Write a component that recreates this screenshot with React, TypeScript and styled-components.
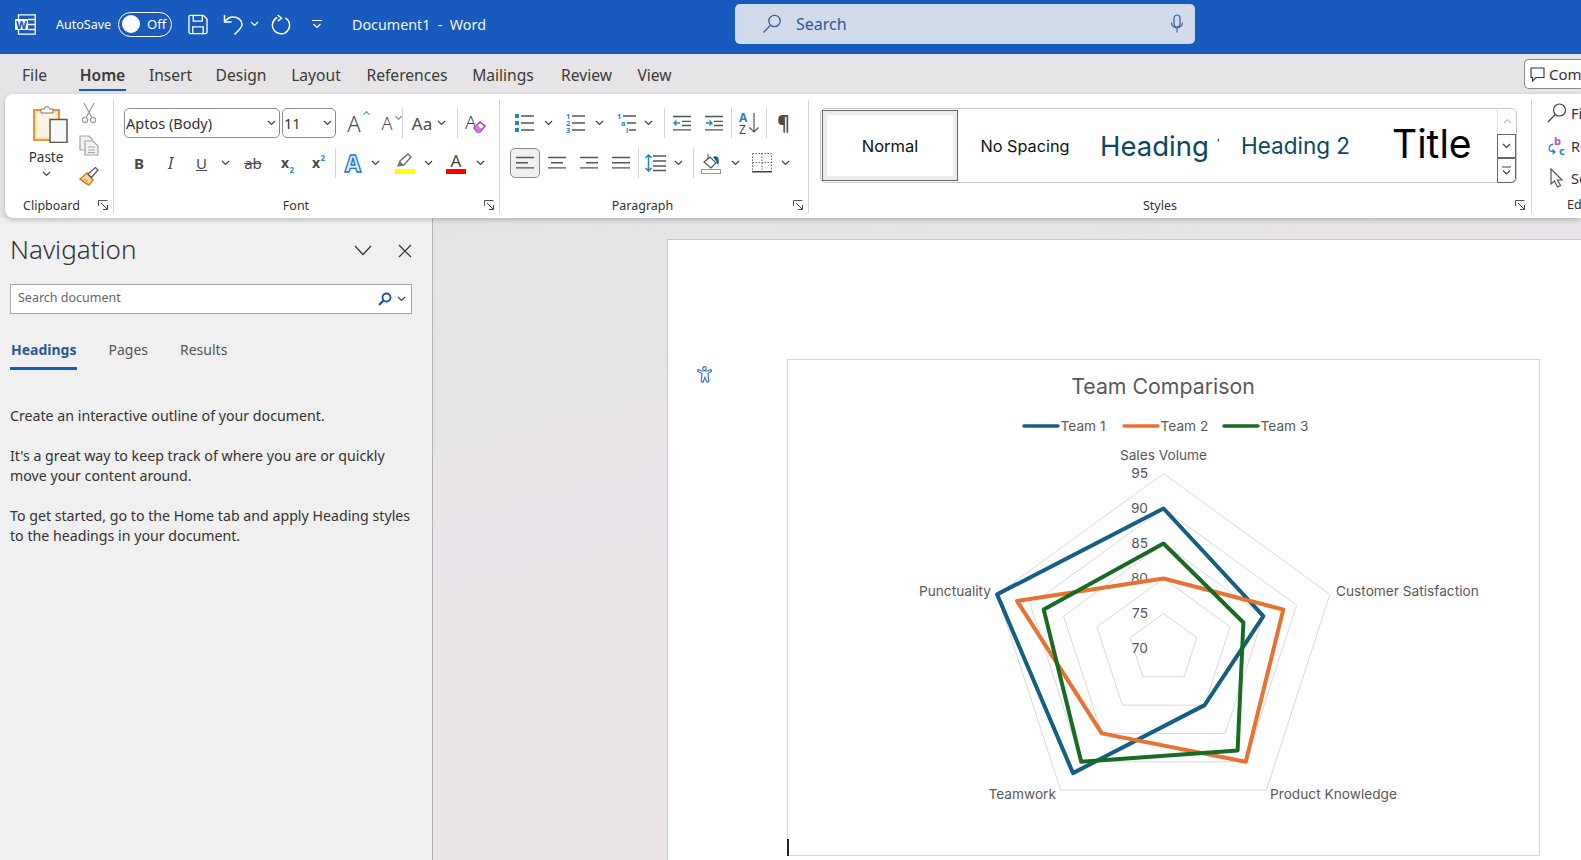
import React from "react";
import styled, { createGlobalStyle } from "styled-components";

const UI_FONT = `"Noto Sans", "Open Sans", "Liberation Sans", sans-serif`;
const DOC_FONT = `Inter, Lato, "Liberation Sans", sans-serif`;

const TEAMS = [
  { name: "Team 1", color: "#156082", values: [90, 85, 80, 92, 95] },
  { name: "Team 2", color: "#e97132", values: [80, 88, 90, 85, 92] },
  { name: "Team 3", color: "#196b24", values: [85, 82, 88, 90, 88] },
];
const LEVELS = [75, 80, 85, 90, 95];
const TICKS = [70, 75, 80, 85, 90, 95];
const CENTER_X = 375.5;
const CENTER_Y = 288.5;

function radarPoint(value: number, index: number) {
  const r = (value - 70) * 7;
  const a = (index * 72 * Math.PI) / 180;
  return `${(CENTER_X + r * Math.sin(a)).toFixed(1)},${(CENTER_Y - r * Math.cos(a)).toFixed(1)}`;
}

function Chev({ color = "#444" }: { color?: string }) {
  return (
    <svg width="9" height="6" viewBox="0 0 9 6">
      <path d="M1 1l3.5 3.5L8 1" stroke={color} fill="none" strokeWidth="1.2" />
    </svg>
  );
}

function Launcher() {
  return (
    <svg width="10" height="10" viewBox="0 0 10 10">
      <path d="M.5 6V.5H9.5" stroke="#555" fill="none" />
      <path d="M3 3l6 6M9.5 5v4.5H5" stroke="#444" fill="none" />
    </svg>
  );
}

function Lines({ rows }: { rows: [number, number][] }) {
  return (
    <svg width="18" height="16" viewBox="0 0 18 16">
      {rows.map(([x1, x2], i) => (
        <path key={i} d={`M${x1} ${2.5 + i * 5.2}H${x2}`} stroke="#555" strokeWidth="1.4" />
      ))}
    </svg>
  );
}

function ListIcon({ marks }: { marks: string[] }) {
  return (
    <svg width="19" height="20" viewBox="0 0 19 20">
      {marks.map((m, i) =>
        m === "" ? (
          <rect key={i} x="0" y={1 + i * 7} width="4" height="4" fill="#1f83d0" />
        ) : (
          <text key={i} x="0" y={6 + i * 7} fontSize="7.5" fontWeight="700" fill="#1f83d0" fontFamily={UI_FONT}>
            {m}
          </text>
        )
      )}
      {marks.map((_, i) => (
        <path key={i} d={`M6 ${3 + i * 7}H19`} stroke="#555" strokeWidth="1.3" />
      ))}
    </svg>
  );
}

function App() {
  return (
    <>
      <GlobalStyle />
      <StyledApp>
        <StyledTitleBar>
          <StyledWordLogo>
            <svg width="21" height="21" viewBox="0 0 21 21">
              <path d="M3.5.8h16.7v19.4H3.5z" fill="none" stroke="#fff" strokeWidth="1.3" />
              <path d="M13 5.5h7M13 10.5h7M13 15.5h7" stroke="#fff" strokeWidth="1.3" />
              <rect x="0" y="5" width="13" height="11" rx="1" fill="#fff" />
              <text x="6.5" y="14.5" textAnchor="middle" fontSize="11" fontWeight="800" fill="#185abd" fontFamily={UI_FONT}>
                W
              </text>
            </svg>
          </StyledWordLogo>
          <StyledAutoSave>AutoSave</StyledAutoSave>
          <StyledToggle>
            <StyledKnob />
            Off
          </StyledToggle>
          <StyledTitleIcon $ml={16} $w={20}>
            <svg width="21" height="21" viewBox="0 0 21 21" fill="none" stroke="#fff" strokeWidth="1.4">
              <path d="M1 2.5A1.5 1.5 0 0 1 2.5 1h13.7L20 4.800V18.500A1.500 1.500 0 0 1 18.500 20H2.500A1.500 1.500 0 0 1 1 18.500z" />
              <path d="M5.500 1v6h9.500V1M5 20v-7h11v7" />
            </svg>
          </StyledTitleIcon>
          <StyledTitleIcon $ml={15} $w={21}>
            <svg width="21" height="22" viewBox="0 0 21 22" fill="none" stroke="#fff" strokeWidth="1.5">
              <path d="M1.500 2v7h7" />
              <path d="M1.500 9C4 5.500 7 4 10 4c5 0 9 3 9 7.500 0 2.500-1.500 4-3 5.500l-4.500 4.500" />
            </svg>
          </StyledTitleIcon>
          <StyledTitleIcon $ml={6} $w={9}>
            <Chev color="#fff" />
          </StyledTitleIcon>
          <StyledTitleIcon $ml={12} $w={21}>
            <svg width="22" height="22" viewBox="0 0 22 22" fill="none" stroke="#fff" strokeWidth="1.500">
              <path d="M7 1.500l4 3.500-4 3" />
              <path d="M6.500 4.200A9 9 0 1 0 15 4.500" />
            </svg>
          </StyledTitleIcon>
          <StyledTitleIcon $ml={20} $w={10}>
            <svg width="10" height="10" viewBox="0 0 10 10" fill="none" stroke="#fff" strokeWidth="1.200">
              <path d="M0 1.500h10M1.500 5l3.500 3.500L8.500 5" />
            </svg>
          </StyledTitleIcon>
          <StyledDocName>Document1&nbsp; -&nbsp; Word</StyledDocName>
          <StyledSearch>
            <svg width="20" height="20" viewBox="0 0 20 20" fill="none" stroke="#3a5f9f" strokeWidth="1.300">
              <circle cx="12.500" cy="7" r="5.700" />
              <path d="M8.500 11.200L1.500 18.500" />
            </svg>
            <StyledSearchText>Search</StyledSearchText>
            <svg width="14" height="20" viewBox="0 0 14 20" fill="none" stroke="#3a5f9f" strokeWidth="1.200">
              <rect x="4" y="1" width="6" height="12" rx="3" />
              <path d="M1.500 8.500a5.500 5.500 0 0 0 11 0M7 14v4.500" />
            </svg>
          </StyledSearch>
        </StyledTitleBar>

        <StyledTabStrip>
          <StyledTabs>
            <StyledTab $w={25} $mr={9}>File</StyledTab>
            <StyledTab $w={47} $active>Home</StyledTab>
            <StyledTab $w={43}>Insert</StyledTab>
            <StyledTab $w={52}>Design</StyledTab>
            <StyledTab $w={52}>Layout</StyledTab>
            <StyledTab $w={84}>References</StyledTab>
            <StyledTab $w={62} $mr={3}>Mailings</StyledTab>
            <StyledTab $w={53}>Review</StyledTab>
            <StyledTab $w={37}>View</StyledTab>
          </StyledTabs>
          <StyledComments>
            <svg width="15" height="15" viewBox="0 0 15 15" fill="none" stroke="#333" strokeWidth="1.100">
              <path d="M1 1h13v9.500H6L2.500 14v-3.500H1z" />
            </svg>
            Comments
          </StyledComments>
        </StyledTabStrip>

        <StyledRibbonBand>
          <StyledRibbon>
            <StyledGroup $w={109}>
              <StyledClipboardBody>
                <StyledPasteColumn>
                  <svg width="35" height="39" viewBox="0 0 35 39">
                    <rect x="1" y="6" width="25" height="30" fill="#fbe3b8" stroke="#e8923c" strokeWidth="2" />
                    <rect x="4" y="9" width="19" height="24" fill="#fdf3e0" />
                    <path d="M8 9V5h3.500a2.500 2.500 0 0 1 5 0H20v4z" fill="#fff" stroke="#777" />
                    <rect x="17" y="15.500" width="17" height="23" fill="#f8f8f8" stroke="#5a5a5a" strokeWidth="1.500" />
                  </svg>
                  <StyledPasteLabel>Paste</StyledPasteLabel>
                  <Chev />
                </StyledPasteColumn>
                <StyledClipTools>
                  <svg width="14" height="22" viewBox="0 0 14 22" fill="none" stroke="#9a9a9a" strokeWidth="1.200">
                    <path d="M2 1l7.500 14M12 1L4.500 15" />
                    <circle cx="3" cy="18" r="2.700" />
                    <circle cx="11" cy="18" r="2.700" />
                  </svg>
                  <svg width="20" height="21" viewBox="0 0 20 21" fill="#f2f2f2" stroke="#a5a5a5" strokeWidth="1.200">
                    <path d="M1 1h9l3 3v11H1z" />
                    <path d="M6 6h8l5 5v9H6z" />
                    <path d="M9 12h7M9 15h7M9 17.500h7" />
                  </svg>
                  <svg width="20" height="19" viewBox="0 0 20 19">
                    <path d="M1 12l7-6 6 7-4 5c-2-1-6-3-9-6z" fill="#f6d6a8" stroke="#e07c12" strokeWidth="1.500" />
                    <path d="M3 14l4-2M6 16l3-3" stroke="#e07c12" />
                    <path d="M9 7l3.500 3.500L19 3l-2.500-2.500z" fill="#fff" stroke="#555" strokeWidth="1.200" />
                  </svg>
                </StyledClipTools>
              </StyledClipboardBody>
              <StyledFooter $mr={5}>
                <StyledGroupLabel>Clipboard</StyledGroupLabel>
                <Launcher />
              </StyledFooter>
            </StyledGroup>

            <StyledGroup $w={386}>
              <StyledRow>
                <StyledSelect $w={156} $ml={10}>
                  Aptos (Body)
                  <Chev />
                </StyledSelect>
                <StyledSelect $w={54} $ml={2}>
                  11
                  <Chev />
                </StyledSelect>
                <StyledCell $w={20} $ml={8}>
                  <StyledGlyph $size={22} $weight={300}>A</StyledGlyph>
                  <StyledCaret $up />
                </StyledCell>
                <StyledCell $w={18} $ml={14}>
                  <StyledGlyph $size={18} $weight={300}>A</StyledGlyph>
                  <StyledCaret />
                </StyledCell>
                <StyledSep $ml={6} />
                <StyledCell $w={24} $ml={7}>
                  <StyledGlyph $size={17}>Aa</StyledGlyph>
                </StyledCell>
                <StyledCell $w={9} $ml={3}><Chev /></StyledCell>
                <StyledSep $ml={11} />
                <StyledCell $w={21} $ml={7}>
                  <svg width="21" height="20" viewBox="0 0 21 20">
                    <text x="0" y="16" fontSize="19" fontWeight="300" fill="#444" fontFamily={UI_FONT}>A</text>
                    <path d="M9 15l6-6 5 4-5 6h-3z" fill="#fff" stroke="#9b3fae" strokeWidth="1.500" />
                    <path d="M12 12l5 4-2 3h-3l-3-4z" fill="#c77fd6" />
                  </svg>
                </StyledCell>
              </StyledRow>
              <StyledRow $mt={10}>
                <StyledCell $w={10} $ml={20}>
                  <StyledGlyph $size={15} $weight={700}>B</StyledGlyph>
                </StyledCell>
                <StyledCell $w={9} $ml={22}>
                  <StyledGlyph $size={16} $italic>I</StyledGlyph>
                </StyledCell>
                <StyledCell $w={11} $ml={21}>
                  <StyledGlyph $size={15} $underline>U</StyledGlyph>
                </StyledCell>
                <StyledCell $w={9} $ml={14}><Chev /></StyledCell>
                <StyledCell $w={20} $ml={13}>
                  <StyledGlyph $size={15} $strike>ab</StyledGlyph>
                </StyledCell>
                <StyledCell $w={14} $ml={15}>
                  <StyledGlyph $size={14} $weight={700}>x</StyledGlyph>
                  <StyledSub>2</StyledSub>
                </StyledCell>
                <StyledCell $w={14} $ml={17}>
                  <StyledGlyph $size={14} $weight={700}>x</StyledGlyph>
                  <StyledSup>2</StyledSup>
                </StyledCell>
                <StyledSep $ml={12} />
                <StyledCell $w={20} $ml={7}>
                  <StyledEffectA>A</StyledEffectA>
                </StyledCell>
                <StyledCell $w={9} $ml={8}><Chev /></StyledCell>
                <StyledCell $w={20} $ml={15}>
                  <StyledColorTool>
                    <svg width="20" height="15" viewBox="0 0 20 15">
                      <path d="M3 13l2-5 8-7 3 3-7 8z" fill="#fff" stroke="#666" strokeWidth="1.300" />
                      <path d="M3 13l2-5 4 4z" fill="#777" />
                    </svg>
                    <StyledColorBar $color="#ffff00" />
                  </StyledColorTool>
                </StyledCell>
                <StyledCell $w={9} $ml={9}><Chev /></StyledCell>
                <StyledCell $w={20} $ml={13}>
                  <StyledColorTool>
                    <StyledColorLetter>A</StyledColorLetter>
                    <StyledColorBar $color="#ff0000" />
                  </StyledColorTool>
                </StyledCell>
                <StyledCell $w={9} $ml={10}><Chev /></StyledCell>
              </StyledRow>
              <StyledFooter $mr={5}>
                <StyledGroupLabel $pr={6}>Font</StyledGroupLabel>
                <Launcher />
              </StyledFooter>
            </StyledGroup>

            <StyledGroup $w={309}>
              <StyledRow>
                <StyledCell $w={19} $ml={15}><ListIcon marks={["", "", ""]} /></StyledCell>
                <StyledCell $w={9} $ml={10}><Chev /></StyledCell>
                <StyledCell $w={19} $ml={13}><ListIcon marks={["1", "2", "3"]} /></StyledCell>
                <StyledCell $w={9} $ml={10}><Chev /></StyledCell>
                <StyledCell $w={19} $ml={13}>
                  <svg width="19" height="20" viewBox="0 0 19 20">
                    <text x="0" y="6" fontSize="7.500" fontWeight="700" fill="#1f83d0" fontFamily={UI_FONT}>1</text>
                    <text x="4" y="13" fontSize="7.500" fontWeight="700" fill="#1f83d0" fontFamily={UI_FONT}>a</text>
                    <text x="9" y="20" fontSize="7.500" fontWeight="700" fill="#1f83d0" fontFamily={UI_FONT}>i</text>
                    <path d="M6 3h13M10 10h9M12 17h7" stroke="#555" strokeWidth="1.300" />
                  </svg>
                </StyledCell>
                <StyledCell $w={9} $ml={8}><Chev /></StyledCell>
                <StyledSep $ml={11} />
                <StyledCell $w={18} $ml={8}>
                  <svg width="18" height="16" viewBox="0 0 18 16" fill="none">
                    <path d="M0 1.500h18M9 6.300h9M9 10.500h9M0 14.800h18" stroke="#555" strokeWidth="1.300" />
                    <path d="M7 8H1M3.500 5.500L1 8l2.500 2.500" stroke="#1f83d0" strokeWidth="1.300" />
                  </svg>
                </StyledCell>
                <StyledCell $w={18} $ml={14}>
                  <svg width="18" height="16" viewBox="0 0 18 16" fill="none">
                    <path d="M0 1.500h18M9 6.300h9M9 10.500h9M0 14.800h18" stroke="#555" strokeWidth="1.300" />
                    <path d="M1 8h6M4.500 5.500L7 8l-2.500 2.500" stroke="#1f83d0" strokeWidth="1.300" />
                  </svg>
                </StyledCell>
                <StyledSep $ml={8} />
                <StyledCell $w={20} $ml={7}>
                  <svg width="20" height="22" viewBox="0 0 20 22">
                    <text x="0" y="10" fontSize="12" fontWeight="700" fill="#1f83d0" fontFamily={UI_FONT}>A</text>
                    <text x="0" y="21.500" fontSize="12" fontWeight="400" fill="#444" fontFamily={UI_FONT}>Z</text>
                    <path d="M15 1v19M10.500 15.500l4.500 4.500 4.500-4.500" stroke="#555" strokeWidth="1.200" fill="none" />
                  </svg>
                </StyledCell>
                <StyledSep $ml={7} />
                <StyledCell $w={13} $ml={10}>
                  <StyledGlyph $size={19} $weight={700}>¶</StyledGlyph>
                </StyledCell>
              </StyledRow>
              <StyledRow $mt={10}>
                <StyledAlignActive>
                  <Lines rows={[[0, 18], [0, 12], [0, 18], [0, 12]]} />
                </StyledAlignActive>
                <StyledCell $w={18} $ml={8}><Lines rows={[[0, 18], [3, 15], [0, 18], [3, 15]]} /></StyledCell>
                <StyledCell $w={18} $ml={14}><Lines rows={[[0, 18], [6, 18], [0, 18], [6, 18]]} /></StyledCell>
                <StyledCell $w={18} $ml={14}><Lines rows={[[0, 18], [0, 18], [0, 18], [0, 18]]} /></StyledCell>
                <StyledSep $ml={8} />
                <StyledCell $w={21} $ml={6}>
                  <svg width="21" height="18" viewBox="0 0 21 18" fill="none">
                    <path d="M8 2h13M8 7h13M8 12h13M8 16.500h13" stroke="#555" strokeWidth="1.400" />
                    <path d="M3.500 1v16M.5 4l3-3 3 3M.5 14l3 3 3-3" stroke="#1f83d0" strokeWidth="1.500" />
                  </svg>
                </StyledCell>
                <StyledCell $w={9} $ml={8}><Chev /></StyledCell>
                <StyledSep $ml={10} />
                <StyledCell $w={20} $ml={7}>
                  <svg width="20" height="21" viewBox="0 0 20 21">
                    <path d="M3 9l6-5 6 6-5 5z" fill="#fff" stroke="#555" strokeWidth="1.200" />
                    <path d="M7 .5v6" stroke="#555" />
                    <path d="M12 4c2-1.500 5-1 5.500 1.500l.5 5-2 .5-1-3z" fill="#156082" />
                    <rect x=".5" y="16.500" width="19" height="4" fill="#fff" stroke="#999" />
                  </svg>
                </StyledCell>
                <StyledCell $w={9} $ml={10}><Chev /></StyledCell>
                <StyledCell $w={20} $ml={12}>
                  <svg width="20" height="20" viewBox="0 0 20 20" fill="none" stroke="#666">
                    <path d="M.5.500h19v18M.5.500v18M10 .500v18M.5 9.500h19" strokeDasharray="1.500 1.500" />
                    <path d="M0 18.800h20" stroke="#444" strokeWidth="1.500" strokeDasharray="none" />
                  </svg>
                </StyledCell>
                <StyledCell $w={9} $ml={9}><Chev /></StyledCell>
              </StyledRow>
              <StyledFooter $mr={5}>
                <StyledGroupLabel $pr={8}>Paragraph</StyledGroupLabel>
                <Launcher />
              </StyledFooter>
            </StyledGroup>

            <StyledGroup $w={723}>
              <StyledGallery>
                <StyledNormalStyle>Normal</StyledNormalStyle>
                <StyledNoSpacing>No Spacing</StyledNoSpacing>
                <StyledHeadingOne>Heading 1</StyledHeadingOne>
                <StyledHeadingTwo>Heading 2</StyledHeadingTwo>
                <StyledTitleStyle>Title</StyledTitleStyle>
                <StyledScrollColumn>
                  <StyledScrollUp>
                    <svg width="9" height="6" viewBox="0 0 9 6">
                      <path d="M1 5l3.500-3.500L8 5" stroke="#c4c4c4" fill="none" strokeWidth="1.200" />
                    </svg>
                  </StyledScrollUp>
                  <StyledScrollBtn $h={24}><Chev /></StyledScrollBtn>
                  <StyledScrollBtn $h={25}>
                    <svg width="9" height="10" viewBox="0 0 9 10" fill="none" stroke="#444" strokeWidth="1.200">
                      <path d="M0 1h9M1 4.500L4.500 8 8 4.500" />
                    </svg>
                  </StyledScrollBtn>
                </StyledScrollColumn>
              </StyledGallery>
              <StyledFooter $mr={6}>
                <StyledGroupLabel $pr={4}>Styles</StyledGroupLabel>
                <Launcher />
              </StyledFooter>
            </StyledGroup>

            <StyledEditing>
              <StyledEditRow>
                <svg width="20" height="20" viewBox="0 0 20 20" fill="none" stroke="#444" strokeWidth="1.200">
                  <circle cx="12.500" cy="7" r="6" />
                  <path d="M8.200 11.500L1 19" />
                </svg>
                Find
              </StyledEditRow>
              <StyledEditRow>
                <svg width="20" height="20" viewBox="0 0 20 20" fill="none">
                  <text x="7" y="9" fontSize="11" fontWeight="700" fill="#b653c6" fontFamily={UI_FONT}>b</text>
                  <text x="12" y="19" fontSize="11" fontWeight="700" fill="#1f83d0" fontFamily={UI_FONT}>c</text>
                  <path d="M6 8C2 9 1 13 3 15l5 1M5.500 13.500L8 16l-2.500 2" stroke="#1f83d0" strokeWidth="1.300" />
                </svg>
                Replace
              </StyledEditRow>
              <StyledEditRow>
                <svg width="20" height="21" viewBox="0 0 20 21" fill="#fff" stroke="#555" strokeWidth="1.200">
                  <path d="M4 1v15l3.500-3 3 6 3-1.500-3-5.500h4.500z" />
                </svg>
                Select
              </StyledEditRow>
              <StyledEditLabel>Editing</StyledEditLabel>
            </StyledEditing>
          </StyledRibbon>
        </StyledRibbonBand>

        <StyledMain>
          <StyledNavPane>
            <StyledNavHeader>
              <StyledNavTitle>Navigation</StyledNavTitle>
              <svg width="18" height="11" viewBox="0 0 18 11" fill="none" stroke="#333" strokeWidth="1.200">
                <path d="M1 1l8 8.500L17 1" />
              </svg>
              <StyledNavClose>
                <svg width="14" height="14" viewBox="0 0 14 14" fill="none" stroke="#333" strokeWidth="1.200">
                  <path d="M1 1l12 12M13 1L1 13" />
                </svg>
              </StyledNavClose>
            </StyledNavHeader>
            <StyledNavSearch>
              <StyledNavSearchText>Search document</StyledNavSearchText>
              <svg width="14" height="14" viewBox="0 0 14 14" fill="none" stroke="#1f4e9c" strokeWidth="1.800">
                <circle cx="8.500" cy="5.500" r="4" />
                <path d="M5.500 8.500L1 13" strokeWidth="2.200" />
              </svg>
              <Chev />
            </StyledNavSearch>
            <StyledNavTabs>
              <StyledNavTab $active>Headings</StyledNavTab>
              <StyledNavTab>Pages</StyledNavTab>
              <StyledNavTab>Results</StyledNavTab>
            </StyledNavTabs>
            <StyledNavText>Create an interactive outline of your document.</StyledNavText>
            <StyledNavText>
              It's a great way to keep track of where you are or quickly move your content around.
            </StyledNavText>
            <StyledNavText>
              To get started, go to the Home tab and apply Heading styles to the headings in your document.
            </StyledNavText>
          </StyledNavPane>

          <StyledDocArea>
            <StyledPage>
              <StyledAnchor>
                <svg width="15" height="17" viewBox="0 0 15 17" fill="none" stroke="#3b73d6" strokeWidth="1.200">
                  <circle cx="7.500" cy="2.500" r="1.800" />
                  <path d="M1 3.500l4 1.500h5l4-1.500.5 1.500-3.500 2.500.8 8-1.800.8-2-5-2 5-1.800-.8.8-8L.5 5z" />
                </svg>
              </StyledAnchor>
              <StyledChartFrame>
                <StyledCaretLine />
                <svg width="751" height="495" viewBox="0 0 751 495">
                  <StyledChartTitle x={375} y={34} textAnchor="middle">Team Comparison</StyledChartTitle>
                  {TEAMS.map((team, i) => (
                    <g key={team.name}>
                      <path
                        d={`M${236 + i * 100} 66h34`}
                        stroke={team.color}
                        strokeWidth="3.500"
                        strokeLinecap="round"
                      />
                      <StyledChartLabel x={272.5 + i * 100} y={71}>{team.name}</StyledChartLabel>
                    </g>
                  ))}
                  {LEVELS.map((level) => (
                    <polygon
                      key={level}
                      points={[0, 1, 2, 3, 4].map((i) => radarPoint(level, i)).join(" ")}
                      fill="none"
                      stroke="#d9d9d9"
                    />
                  ))}
                  {TICKS.map((tick) => (
                    <StyledChartLabel key={tick} x={360} y={CENTER_Y + 4.5 - (tick - 70) * 7} textAnchor="end">
                      {tick}
                    </StyledChartLabel>
                  ))}
                  {TEAMS.map((team) => (
                    <polygon
                      key={team.name}
                      points={team.values.map((v, i) => radarPoint(v, i)).join(" ")}
                      fill="none"
                      stroke={team.color}
                      strokeWidth="4"
                      strokeLinejoin="round"
                    />
                  ))}
                  <StyledChartLabel x={375.5} y={100} textAnchor="middle">Sales Volume</StyledChartLabel>
                  <StyledChartLabel x={548} y={236}>Customer Satisfaction</StyledChartLabel>
                  <StyledChartLabel x={482} y={439}>Product Knowledge</StyledChartLabel>
                  <StyledChartLabel x={268} y={439} textAnchor="end">Teamwork</StyledChartLabel>
                  <StyledChartLabel x={203} y={236} textAnchor="end">Punctuality</StyledChartLabel>
                </svg>
              </StyledChartFrame>
            </StyledPage>
          </StyledDocArea>
        </StyledMain>
      </StyledApp>
    </>
  );
}

export default App;

const GlobalStyle = createGlobalStyle`
  html, body {
    margin: 0;
    height: 100%;
    overflow: hidden;
    font-family: ${UI_FONT};
  }
  * {
    box-sizing: border-box;
  }
`;

const StyledApp = styled.div`
  height: 100vh;
  display: flex;
  flex-direction: column;
  overflow: hidden;
  background: #e6e4e6;
`;

const StyledTitleBar = styled.div`
  height: 54px;
  flex-shrink: 0;
  display: flex;
  align-items: center;
  padding: 0 0 6px 15px;
  background: #185abd;
  color: #fff;
`;

const StyledWordLogo = styled.div`
  width: 21px;
  height: 21px;
  display: flex;
`;

const StyledAutoSave = styled.div`
  margin-left: 20px;
  width: 56px;
  font-size: 12.5px;
  white-space: nowrap;
`;

const StyledToggle = styled.div`
  margin-left: 6px;
  width: 54px;
  height: 25px;
  display: flex;
  align-items: center;
  gap: 7px;
  padding-left: 3px;
  border: 1.5px solid #fff;
  border-radius: 13px;
  font-size: 13px;
`;

const StyledKnob = styled.div`
  width: 18px;
  height: 18px;
  border-radius: 50%;
  background: #fff;
`;

const StyledTitleIcon = styled.div<{ $ml: number; $w: number }>`
  margin-left: ${(p) => p.$ml}px;
  width: ${(p) => p.$w}px;
  display: flex;
  justify-content: center;
`;

const StyledDocName = styled.div`
  margin-left: 30px;
  width: 135px;
  font-size: 14.3px;
  white-space: nowrap;
  color: #f2f5fb;
`;

const StyledSearch = styled.div`
  margin-left: 248px;
  width: 460px;
  height: 40px;
  display: flex;
  align-items: center;
  padding: 0 11px 0 27px;
  background: #d1dbec;
  border-radius: 5px;
`;

const StyledSearchText = styled.div`
  flex: 1;
  margin-left: 14px;
  font-size: 16px;
  color: #2b579a;
`;

const StyledTabStrip = styled.div`
  height: 40px;
  flex-shrink: 0;
  display: flex;
  align-items: center;
  justify-content: space-between;
`;

const StyledTabs = styled.div`
  display: flex;
  gap: 23px;
  padding-left: 22px;
  height: 100%;
`;

const StyledTab = styled.div<{ $w: number; $mr?: number; $active?: boolean }>`
  position: relative;
  width: ${(p) => p.$w}px;
  margin-right: ${(p) => p.$mr || 0}px;
  padding-top: 2px;
  display: flex;
  align-items: center;
  justify-content: center;
  font-size: 15.6px;
  font-weight: ${(p) => (p.$active ? 600 : 400)};
  color: #3a3a3a;
  white-space: nowrap;
  ${(p) =>
    p.$active &&
    `&::after {
      content: "";
      position: absolute;
      left: 0;
      right: 0;
      bottom: 3px;
      height: 2.5px;
      background: #185abd;
    }`}
`;

const StyledComments = styled.div`
  width: 57px;
  height: 30px;
  display: flex;
  align-items: center;
  gap: 4px;
  padding-left: 5px;
  overflow: hidden;
  white-space: nowrap;
  background: #fdfdfd;
  border: 1px solid #8a8a8a;
  border-right: none;
  border-radius: 5px 0 0 5px;
  font-size: 15px;
  color: #333;
  svg {
    flex-shrink: 0;
  }
`;

const StyledRibbonBand = styled.div`
  padding-left: 5px;
  flex-shrink: 0;
  position: relative;
  z-index: 1;
`;

const StyledRibbon = styled.div`
  height: 124px;
  display: flex;
  padding: 6px 0 5px;
  overflow: hidden;
  background: #fff;
  border-radius: 8px 0 0 8px;
  box-shadow: 0 2px 5px rgba(0, 0, 0, 0.22);
`;

const StyledGroup = styled.div<{ $w: number }>`
  width: ${(p) => p.$w}px;
  flex-shrink: 0;
  display: flex;
  flex-direction: column;
  padding-top: 8px;
  border-right: 1px solid #d4d4d4;
`;

const StyledClipboardBody = styled.div`
  display: flex;
  align-items: flex-start;
  margin-top: -4px;
  padding-left: 22px;
`;

const StyledPasteColumn = styled.div`
  width: 38px;
  display: flex;
  flex-direction: column;
  align-items: center;
  svg:first-child {
    margin-left: 9px;
    flex-shrink: 0;
  }
`;

const StyledPasteLabel = styled.div`
  margin: 5px 0 5px;
  font-size: 13.5px;
  line-height: 18px;
  color: #333;
`;

const StyledClipTools = styled.div`
  width: 20px;
  margin-left: 14px;
  margin-top: -2px;
  display: flex;
  flex-direction: column;
  align-items: center;
  gap: 11px;
`;

const StyledFooter = styled.div<{ $mr: number }>`
  margin-top: auto;
  height: 16px;
  display: flex;
  align-items: center;
  padding-right: ${(p) => p.$mr}px;
`;

const StyledGroupLabel = styled.div<{ $pr?: number }>`
  flex: 1;
  text-align: center;
  padding-right: ${(p) => p.$pr || 0}px;
  font-size: 12.5px;
  color: #333;
`;

const StyledRow = styled.div<{ $mt?: number }>`
  height: 30px;
  flex-shrink: 0;
  margin-top: ${(p) => p.$mt || 0}px;
  display: flex;
  align-items: center;
`;

const StyledCell = styled.div<{ $w: number; $ml: number }>`
  position: relative;
  flex-shrink: 0;
  width: ${(p) => p.$w}px;
  margin-left: ${(p) => p.$ml}px;
  display: flex;
  align-items: center;
  justify-content: center;
`;

const StyledSep = styled.div<{ $ml: number }>`
  width: 1px;
  height: 30px;
  flex-shrink: 0;
  margin-left: ${(p) => p.$ml}px;
  background: #d4d4d4;
`;

const StyledSelect = styled.div<{ $w: number; $ml: number }>`
  width: ${(p) => p.$w}px;
  height: 30px;
  flex-shrink: 0;
  margin-left: ${(p) => p.$ml}px;
  display: flex;
  align-items: center;
  justify-content: space-between;
  padding: 0 3px 0 1px;
  background: #fff;
  border: 1px solid #8a8a8a;
  border-radius: 5px;
  font-size: 14.5px;
  color: #333;
`;

const StyledGlyph = styled.span<{
  $size: number;
  $weight?: number;
  $italic?: boolean;
  $underline?: boolean;
  $strike?: boolean;
}>`
  font-size: ${(p) => p.$size}px;
  font-weight: ${(p) => p.$weight || 400};
  font-style: ${(p) => (p.$italic ? "italic" : "normal")};
  text-decoration: ${(p) =>
    p.$underline ? "underline" : p.$strike ? "line-through" : "none"};
  line-height: 1;
  color: #4a4a4a;
`;

const StyledCaret = styled.span<{ $up?: boolean }>`
  position: absolute;
  top: 0;
  right: -5px;
  width: 5px;
  height: 5px;
  border: solid #2f8ed6;
  border-width: ${(p) => (p.$up ? "1.5px 0 0 1.5px" : "0 1.5px 1.5px 0")};
  transform: rotate(45deg);
`;

const StyledSub = styled.span`
  position: absolute;
  right: -2px;
  bottom: -5px;
  font-size: 8px;
  font-weight: 700;
  color: #2f8ed6;
`;

const StyledSup = styled.span`
  position: absolute;
  right: -2px;
  top: -4px;
  font-size: 8px;
  font-weight: 700;
  color: #2f8ed6;
`;

const StyledEffectA = styled.span`
  font-size: 23px;
  font-weight: 800;
  line-height: 1;
  color: #d6eaf8;
  -webkit-text-stroke: 1.3px #1f77c4;
`;

const StyledColorTool = styled.div`
  width: 20px;
  display: flex;
  flex-direction: column;
  align-items: center;
  gap: 1px;
`;

const StyledColorBar = styled.div<{ $color: string }>`
  width: 20px;
  height: 5px;
  background: ${(p) => p.$color};
`;

const StyledColorLetter = styled.span`
  font-size: 17px;
  line-height: 15px;
  color: #444;
`;

const StyledAlignActive = styled.div`
  width: 30px;
  height: 30px;
  flex-shrink: 0;
  margin-left: 10px;
  display: flex;
  align-items: center;
  justify-content: center;
  background: #f0f0f0;
  border: 1px solid #8a8a8a;
  border-radius: 5px;
`;

const StyledGallery = styled.div`
  width: 697px;
  height: 75px;
  margin-left: 11px;
  display: flex;
  align-items: center;
  font-family: ${DOC_FONT};
  white-space: nowrap;
  border: 1px solid #c8c8c8;
  border-radius: 5px;
`;

const StyledNormalStyle = styled.div`
  width: 136px;
  height: 71px;
  margin-left: 1px;
  flex-shrink: 0;
  display: flex;
  align-items: center;
  justify-content: center;
  font-size: 16.5px;
  color: #111;
  border: 1px solid #666;
  box-shadow: inset 0 0 0 4px #ececec;
`;

const StyledNoSpacing = styled.div`
  width: 134px;
  flex-shrink: 0;
  text-align: center;
  font-size: 16.3px;
  color: #111;
`;

const StyledHeadingOne = styled.div`
  width: 119px;
  margin-left: 8px;
  flex-shrink: 0;
  overflow: hidden;
  font-size: 27.5px;
  color: #0f4761;
`;

const StyledHeadingTwo = styled.div`
  margin-left: 22px;
  width: 110px;
  flex-shrink: 0;
  font-size: 22.5px;
  color: #0f4761;
`;

const StyledTitleStyle = styled.div`
  margin-left: 41px;
  margin-top: -4px;
  flex-shrink: 0;
  font-size: 39px;
  color: #000;
`;

const StyledScrollColumn = styled.div`
  margin-left: auto;
  width: 19px;
  height: 75px;
  flex-shrink: 0;
  display: flex;
  flex-direction: column;
`;

const StyledScrollUp = styled.div`
  height: 26px;
  display: flex;
  align-items: center;
  justify-content: center;
  border-left: 1px solid #e0e0e0;
`;

const StyledScrollBtn = styled.div<{ $h: number }>`
  height: ${(p) => p.$h}px;
  display: flex;
  align-items: center;
  justify-content: center;
  border: 1px solid #666;
  &:last-child {
    border-radius: 0 0 5px 0;
  }
`;

const StyledEditing = styled.div`
  position: relative;
  flex: 1;
  margin-top: -3px;
  padding-left: 15px;
  display: flex;
  flex-direction: column;
  font-size: 14.5px;
  color: #333;
`;

const StyledEditRow = styled.div`
  height: 32.5px;
  display: flex;
  align-items: center;
  gap: 4px;
  white-space: nowrap;
`;

const StyledEditLabel = styled.div`
  margin-top: auto;
  margin-left: 20px;
  height: 16px;
  font-size: 12.5px;
  line-height: 16px;
`;

const StyledMain = styled.div`
  flex: 1;
  min-height: 0;
  display: flex;
`;

const StyledNavPane = styled.div`
  width: 433px;
  flex-shrink: 0;
  padding: 14px 10px 0;
  background: #f0f0f0;
  border-right: 1px solid #b5b3b5;
`;

const StyledNavHeader = styled.div`
  height: 36px;
  display: flex;
  align-items: center;
  justify-content: flex-end;
`;

const StyledNavTitle = styled.div`
  flex: 1;
  margin-top: -3px;
  font-size: 26px;
  font-weight: 300;
  color: #333;
`;

const StyledNavClose = styled.div`
  margin: 1px 10px 0 26px;
  display: flex;
`;

const StyledNavSearch = styled.div`
  width: 402px;
  height: 30px;
  margin-top: 16px;
  display: flex;
  align-items: center;
  gap: 5px;
  padding: 0 5px 0 7px;
  background: #fff;
  border: 1px solid #a6a6a6;
`;

const StyledNavSearchText = styled.div`
  flex: 1;
  margin-top: -4px;
  font-size: 12.5px;
  color: #666;
`;

const StyledNavTabs = styled.div`
  height: 43px;
  margin-top: 13px;
  display: flex;
  gap: 30px;
`;

const StyledNavTab = styled.div<{ $active?: boolean }>`
  padding: 0 1px;
  height: 43px;
  font-size: 14px;
  line-height: 46px;
  font-weight: ${(p) => (p.$active ? 700 : 400)};
  color: ${(p) => (p.$active ? "#2b579a" : "#555")};
  border-bottom: 3px solid ${(p) => (p.$active ? "#185abd" : "transparent")};
`;

const StyledNavText = styled.p`
  margin: 20px 0 0;
  width: 410px;
  font-size: 14.2px;
  line-height: 20px;
  color: #333;
  &:first-of-type {
    margin-top: 36px;
  }
`;

const StyledDocArea = styled.div`
  flex: 1;
  min-width: 0;
  overflow: hidden;
  padding: 21px 0 0 234px;
  background: linear-gradient(165deg, #e4e4e6 0%, #e8e3e8 35%, #e9e3e7 75%, #e7e3e5 100%);
`;

const StyledPage = styled.div`
  position: relative;
  width: 1100px;
  height: 800px;
  padding: 119px 0 0 119px;
  background: #fff;
  border: 1px solid #c6c6c6;
`;

const StyledAnchor = styled.div`
  position: absolute;
  left: 29px;
  top: 126px;
  display: flex;
`;

const StyledChartFrame = styled.div`
  position: relative;
  width: 753px;
  height: 497px;
  border: 1px solid #d9d9d9;
  svg {
    display: block;
  }
`;

const StyledCaretLine = styled.div`
  position: absolute;
  left: -1px;
  bottom: -1px;
  width: 1.5px;
  height: 17px;
  background: #222;
`;

const StyledChartTitle = styled.text`
  font-family: ${DOC_FONT};
  font-size: 21.3px;
  fill: #595959;
`;

const StyledChartLabel = styled.text`
  font-family: ${DOC_FONT};
  font-size: 13.7px;
  fill: #595959;
`;
